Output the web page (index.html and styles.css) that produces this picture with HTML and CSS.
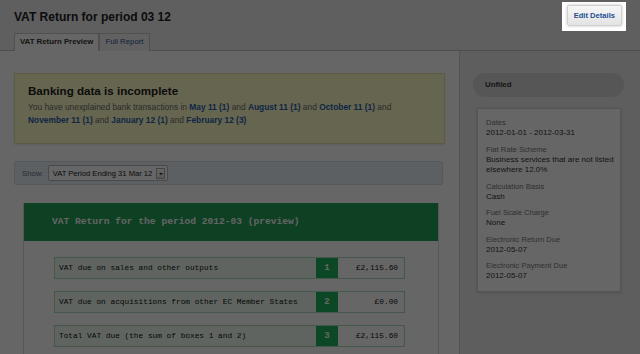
FILE: index.html
```html
<!DOCTYPE html>
<html lang="en">
<head>
    <meta charset="UTF-8">
    <meta name="viewport" content="width=device-width, initial-scale=1.0">
    <title>VAT Return for period 03 12</title>
    <link rel="stylesheet" href="styles.css">
</head>
<body>
    <header class="top">
        <div class="top-row">
            <h1>VAT Return for period 03 12</h1>
            <div class="spot">
                <a href="#" class="btn">Edit Details</a>
            </div>
        </div>
        <ul class="tabs">
            <li class="tab active">VAT Return Preview</li>
            <li class="tab"><a href="#">Full Report</a></li>
        </ul>
    </header>

    <div class="layout">
        <main class="main">
            <div class="notice">
                <h2>Banking data is incomplete</h2>
                <p>You have unexplained bank transactions in <a href="#">May 11 (1)</a> and <a href="#">August 11 (1)</a> and <a href="#">October 11 (1)</a> and
                <a href="#">November 11 (1)</a> and <a href="#">January 12 (1)</a> and <a href="#">February 12 (3)</a></p>
            </div>

            <div class="filter">
                <label>Show:</label>
                <span class="select">VAT Period Ending 31 Mar 12<span class="arrow"></span></span>
            </div>

            <div class="vat">
                <div class="vat-head">VAT Return for the period 2012-03 (preview)</div>
                <div class="vat-body">
                    <div class="vat-row">
                        <div class="vat-label">VAT due on sales and other outputs</div>
                        <div class="vat-num">1</div>
                        <div class="vat-value">£2,115.60</div>
                    </div>
                    <div class="vat-row">
                        <div class="vat-label">VAT due on acquisitions from other EC Member States</div>
                        <div class="vat-num">2</div>
                        <div class="vat-value">£0.00</div>
                    </div>
                    <div class="vat-row">
                        <div class="vat-label">Total VAT due (the sum of boxes 1 and 2)</div>
                        <div class="vat-num">3</div>
                        <div class="vat-value">£2,115.60</div>
                    </div>
                </div>
            </div>
        </main>

        <aside class="side">
            <div class="status">Unfiled</div>
            <dl class="details">
                <dt>Dates</dt>
                <dd>2012-01-01 - 2012-03-31</dd>
                <dt>Flat Rate Scheme</dt>
                <dd>Business services that are not listed elsewhere 12.0%</dd>
                <dt>Calculation Basis</dt>
                <dd>Cash</dd>
                <dt>Fuel Scale Charge</dt>
                <dd>None</dd>
                <dt>Electronic Return Due</dt>
                <dd>2012-05-07</dd>
                <dt>Electronic Payment Due</dt>
                <dd>2012-05-07</dd>
            </dl>
        </aside>
    </div>

    <!-- tour overlay, the Edit Details button sits above it -->
    <div class="overlay"></div>
</body>
</html>
```

FILE: styles.css
```css
body {
    font-family: 'Liberation Sans', Arial, sans-serif;
    margin: 0;
    padding: 0;
    background-color: #e8e8e8;
    color: #333;
    height: 354px;
    overflow: hidden;
}
a {
    color: #2b62ad;
    text-decoration: none;
}
.top {
    background-color: #ededed;
    border-bottom: 1px solid #c4c4c4;
    padding: 0 14px;
}
.top-row {
    display: flex;
    justify-content: space-between;
    align-items: center;
    height: 33px;
}
.top h1 {
    margin: 0;
    font-size: 12px;
    color: #222;
}
.spot {
    position: relative;
    z-index: 20;
    background: #fff;
    padding: 3px 4px 5px 5px;
}
.btn {
    display: block;
    padding: 0 6px;
    height: 19px;
    line-height: 19px;
    font-size: 7.6px;
    font-weight: bold;
    color: #1d4f94;
    background: linear-gradient(#f6f6f6, #e3e3e3);
    border: 1px solid #d0d0d0;
    border-radius: 2px;
    box-shadow: 0 0 3px rgba(0, 0, 0, 0.25);
}
.tabs {
    display: flex;
    list-style: none;
    margin: 0;
    padding: 0;
    height: 17px;
}
.tab {
    font-size: 7.8px;
    line-height: 16px;
    padding: 0 5px;
    border: 1px solid #c8c8c8;
    border-bottom: none;
    background: #f3f3f3;
    margin-bottom: -1px;
    white-space: nowrap;
}
.tab.active {
    background: #fff;
    font-weight: bold;
    color: #333;
    height: 17px;
}
.tab a {
    color: #2b5590;
}

.layout {
    display: flex;
    height: 303px;
}
.main {
    width: 445px;
    padding: 22px 0 0 14px;
    background: #fff;
    border-right: 1px solid #cfcfcf;
}
.notice {
    width: 404px;
    height: 56px;
    padding: 10px 12px 3px 13px;
    background: #fffdc8;
    border: 1px solid #e6e2a8;
    box-shadow: 0 1px 2px rgba(0, 0, 0, 0.1);
}
.notice h2 {
    margin: 0 0 4px;
    font-size: 11.6px;
    color: #222;
}
.notice p {
    margin: 0;
    font-size: 8.4px;
    line-height: 13px;
    color: #6a6a6a;
}
.notice a {
    font-weight: bold;
    color: #2a5fa8;
}
.filter {
    display: flex;
    align-items: center;
    gap: 4px;
    width: 429px;
    height: 24px;
    margin-top: 17px;
    padding: 0 0 0 7px;
    background: #e8f0f7;
    border: 1px solid #d5dee6;
    border-radius: 2px;
    box-sizing: border-box;
    font-size: 7.8px;
    color: #5b7088;
}
.select {
    display: flex;
    align-items: center;
    height: 14px;
    padding: 0 2px 0 4px;
    background: #fff;
    border: 1px solid #b8b8b8;
    border-radius: 2px;
    color: #222;
    font-size: 7.6px;
}
.arrow {
    width: 7px;
    height: 9px;
    margin-left: 4px;
    border: 1px solid #aaa;
    background: linear-gradient(#fff, #ddd);
    position: relative;
}
.arrow::after {
    content: '';
    position: absolute;
    left: 2px;
    top: 4px;
    border: 2px solid transparent;
    border-top: 2px solid #222;
    border-bottom: none;
}
.vat {
    width: 414px;
    margin: 18px 0 0 9px;
    background: #fff;
    border: 1px solid #d8d8d8;
    border-top: none;
}
.vat-head {
    height: 38px;
    line-height: 38px;
    padding-left: 28px;
    background: #24a15b;
    color: #f8f8f8;
    font-family: 'Liberation Mono', 'Courier New', monospace;
    font-size: 9.6px;
    font-weight: bold;
}
.vat-body {
    padding: 16px 0 0 30px;
    font-family: 'Liberation Mono', 'Courier New', monospace;
    font-size: 7.8px;
}
.vat-row {
    display: flex;
    width: 351px;
    height: 22px;
    margin-bottom: 12px;
    border: 1px solid #a8dcb9;
    box-sizing: border-box;
}
.vat-label {
    flex: 1;
    display: flex;
    align-items: center;
    padding-left: 4px;
    background: #eefaf0;
    color: #111;
}
.vat-num {
    width: 22px;
    display: flex;
    align-items: center;
    justify-content: center;
    background: #20b35e;
    color: #fff;
    font-weight: bold;
    font-size: 9px;
}
.vat-value {
    width: 60px;
    display: flex;
    align-items: center;
    justify-content: flex-end;
    padding-right: 6px;
    color: #111;
}

.side {
    flex: 1;
    padding: 22px 16px 0 13px;
    background: #ebebeb;
}
.status {
    height: 24px;
    line-height: 24px;
    padding-left: 12px;
    border-radius: 12px;
    background: #d6d6d6;
    font-size: 7.8px;
    font-weight: bold;
    color: #333;
}
.details {
    width: 144px;
    margin: 11px 0 0 4px;
    padding: 9px 4px 12px 8px;
    box-sizing: border-box;
    background: #fff;
    border: 1px solid #d2d2d2;
    box-shadow: 0 1px 3px rgba(0, 0, 0, 0.15);
    height: 184px;
}
.details dt {
    font-size: 7.6px;
    line-height: 10px;
    color: #777;
}
.details dd {
    margin: 0 0 6px;
    font-size: 8px;
    line-height: 10.5px;
    color: #333;
}

.overlay {
    position: fixed;
    inset: 0;
    background: rgba(0, 0, 0, 0.6);
    z-index: 10;
}
```
